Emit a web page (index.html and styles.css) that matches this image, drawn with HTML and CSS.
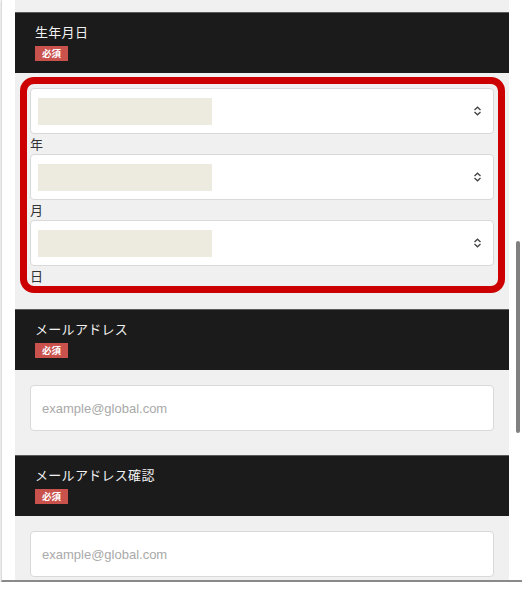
FILE: index.html
```html
<!DOCTYPE html>
<html lang="ja">
<head>
<meta charset="utf-8">
<link rel="stylesheet" href="styles.css">
</head>
<body>
<div class="window">
  <div class="panel">
    <section class="field">
      <div class="field-head">
        <div class="field-title">生年月日</div>
        <span class="badge">必須</span>
      </div>
      <div class="field-body">
        <div class="date-group">
          <div class="select"><span class="redact"></span><svg class="chev" width="9" height="10" viewBox="0 0 9 10"><path d="M1.5 4 L4.5 1.2 L7.5 4 M1.5 6 L4.5 8.8 L7.5 6" fill="none" stroke="#444" stroke-width="1.3"/></svg></div>
          <div class="unit">年</div>
          <div class="select"><span class="redact"></span><svg class="chev" width="9" height="10" viewBox="0 0 9 10"><path d="M1.5 4 L4.5 1.2 L7.5 4 M1.5 6 L4.5 8.8 L7.5 6" fill="none" stroke="#444" stroke-width="1.3"/></svg></div>
          <div class="unit">月</div>
          <div class="select"><span class="redact"></span><svg class="chev" width="9" height="10" viewBox="0 0 9 10"><path d="M1.5 4 L4.5 1.2 L7.5 4 M1.5 6 L4.5 8.8 L7.5 6" fill="none" stroke="#444" stroke-width="1.3"/></svg></div>
          <div class="unit">日</div>
          <div class="highlight"></div>
        </div>
      </div>
    </section>
    <section class="field">
      <div class="field-head">
        <div class="field-title">メールアドレス</div>
        <span class="badge">必須</span>
      </div>
      <div class="field-body">
        <div class="input">example@global.com</div>
      </div>
    </section>
    <section class="field">
      <div class="field-head">
        <div class="field-title">メールアドレス確認</div>
        <span class="badge">必須</span>
      </div>
      <div class="field-body">
        <div class="input">example@global.com</div>
      </div>
    </section>
  </div>
  <div class="scroll-thumb"></div>
</div>
</body>
</html>
```
FILE: styles.css
```css
html, body {
  margin: 0;
  padding: 0;
  background: #ffffff;
}
body {
  font-family: "Noto Sans CJK JP", "Liberation Sans", sans-serif;
}
.window {
  position: relative;
  height: 580px;
  overflow: hidden;
  border-bottom: 2px solid #8a8a8a;
  box-shadow: 0 1px 2px rgba(0,0,0,0.25);
  margin-left: 1px;
  border-left: 1px solid #dcdcdc;
  background: #ffffff;
}
.panel {
  margin-left: 13px;
  width: 494px;
  background: #f0f0f0;
  padding-top: 12px;
  min-height: 600px;
}
.field-head {
  background: #1b1b1b;
  border-top: 1px solid #5a5a5a;
  padding: 10px 20px 11px;
  height: 39px;
}
.field-title {
  color: #f2f2f2;
  font-size: 13px;
  line-height: 18px;
  letter-spacing: 0.3px;
}
.badge {
  display: inline-block;
  margin-top: 5px;
  width: 33px;
  height: 15px;
  line-height: 15px;
  background: #c9524d;
  color: #ffffff;
  font-size: 9.5px;
  font-weight: 700;
  text-align: center;
  vertical-align: top;
}
.field-body {
  padding: 15px 15px 24px;
}
.date-group {
  position: relative;
  padding-bottom: 0;
}
.field:first-child .field-body {
  padding-bottom: 23px;
}
.select, .input {
  box-sizing: border-box;
  height: 46px;
  background: #ffffff;
  border: 1px solid #d9d9d9;
  border-radius: 4px;
  display: flex;
  align-items: center;
}
.select {
  padding: 0 8px 0 7px;
  justify-content: space-between;
}
.redact {
  display: block;
  width: 174px;
  height: 27px;
  background: #edeae0;
}
.chev {
  display: block;
  margin-right: 3px;
}
.unit {
  font-size: 13px;
  line-height: 20px;
  color: #333333;
}
.input {
  padding-left: 11px;
  font-family: "Liberation Sans", Arial, sans-serif;
  font-size: 13px;
  color: #a9a9a9;
}
.highlight {
  position: absolute;
  top: -11px;
  left: -10px;
  right: -11px;
  bottom: -7px;
  border: 7px solid #cc0000;
  border-radius: 14px;
  pointer-events: none;
}
.scroll-thumb {
  position: absolute;
  left: 514px;
  top: 241px;
  width: 4px;
  height: 192px;
  border-radius: 2px;
  background: #808080;
}
```
